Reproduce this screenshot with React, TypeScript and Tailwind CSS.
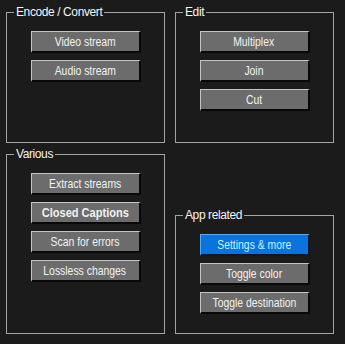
import React from "react";

type BtnProps = { label: string; blue?: boolean; bold?: boolean };

const Btn = ({ label, blue, bold }: BtnProps) => (
  <button
    className={
      blue
        ? "w-[110px] h-[22px] flex items-center justify-center bg-[#0b74dc] border-t border-l border-t-[#5aa8f0] border-l-[#5aa8f0] border-b-2 border-r-2 border-b-[#06182c] border-r-[#06182c] text-[#c6f2ff] text-[13px] leading-none"
        : "w-[110px] h-[22px] flex items-center justify-center bg-[#6c6c6c] border-t border-l border-t-[#c4c4c4] border-l-[#c4c4c4] border-b-2 border-r-2 border-b-[#080808] border-r-[#080808] text-[#f2f2f2] text-[13px] leading-none"
    }
  >
    {bold ? (
      <span className="inline-block whitespace-nowrap font-bold scale-x-[0.85]">{label}</span>
    ) : (
      <span className="inline-block whitespace-nowrap scale-x-[0.8]">{label}</span>
    )}
  </button>
);

type GroupProps = { title: string; className: string; children: React.ReactNode };

const Group = ({ title, className, children }: GroupProps) => (
  <fieldset className={"border border-[#a4a4a4] p-0 m-0 min-w-0 " + className}>
    <legend className="ml-[7px] px-[2px] text-[12px] leading-[16px] tracking-[-0.4px] text-[#f4f4f4]">
      {title}
    </legend>
    <div className="flex flex-col items-center gap-[7px] pt-[11px]">{children}</div>
  </fieldset>
);

export default function App() {
  return (
    <div
      className="w-[345px] h-[344px] bg-[#1b1b1b] pl-[6px] pt-[4px] flex gap-[10px]"
      style={{ fontFamily: '"Liberation Sans", Arial, sans-serif' }}
    >
      <div className="flex flex-col w-[159px] gap-[3px]">
        <Group title="Encode / Convert" className="h-[139px]">
          <Btn label="Video stream" />
          <Btn label="Audio stream" />
        </Group>
        <Group title="Various" className="h-[188px]">
          <Btn label="Extract streams" />
          <Btn label="Closed Captions" bold />
          <Btn label="Scan for errors" />
          <Btn label="Lossless changes" />
        </Group>
      </div>
      <div className="flex flex-col w-[159px] gap-[64px]">
        <Group title="Edit" className="h-[139px]">
          <Btn label="Multiplex" />
          <Btn label="Join" />
          <Btn label="Cut" />
        </Group>
        <Group title="App related" className="h-[127px]">
          <Btn label="Settings & more" blue />
          <Btn label="Toggle color" />
          <Btn label="Toggle destination" />
        </Group>
      </div>
    </div>
  );
}
